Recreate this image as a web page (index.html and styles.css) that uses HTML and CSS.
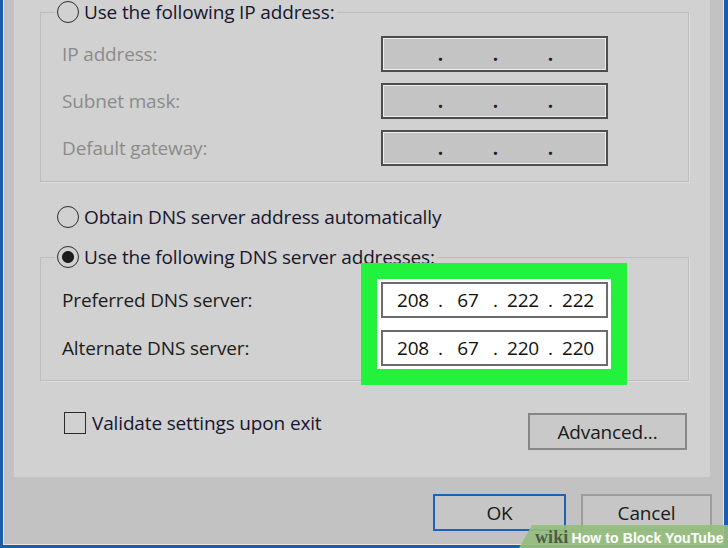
FILE: index.html
```html
<!DOCTYPE html>
<html>
<head>
<meta charset="utf-8">
<link rel="stylesheet" href="styles.css">
</head>
<body>
<div class="window">
  <div class="inner">
    <div class="panel">
      <fieldset class="group">
        <legend class="group-title"><span class="radio"></span><span>Use the following IP address:</span></legend>
        <div class="grid disabled">
          <span class="label">IP address:</span>
          <div class="ipfield off"><span></span><i>.</i><span></span><i>.</i><span></span><i>.</i><span></span></div>
          <span class="label">Subnet mask:</span>
          <div class="ipfield off"><span></span><i>.</i><span></span><i>.</i><span></span><i>.</i><span></span></div>
          <span class="label">Default gateway:</span>
          <div class="ipfield off"><span></span><i>.</i><span></span><i>.</i><span></span><i>.</i><span></span></div>
        </div>
      </fieldset>

      <div class="option"><span class="radio"></span><span>Obtain DNS server address automatically</span></div>

      <fieldset class="group dns">
        <legend class="group-title"><span class="radio checked"></span><span>Use the following DNS server addresses:</span></legend>
        <div class="grid dns-grid">
          <div class="highlight"></div>
          <span class="label r1">Preferred DNS server:</span>
          <div class="ipfield on r1"><span>208</span><i>.</i><span>67</span><i>.</i><span>222</span><i>.</i><span>222</span></div>
          <span class="label r2">Alternate DNS server:</span>
          <div class="ipfield on r2"><span>208</span><i>.</i><span>67</span><i>.</i><span>220</span><i>.</i><span>220</span></div>
        </div>
      </fieldset>

      <div class="panel-foot">
        <div class="check"><span class="box"></span><span>Validate settings upon exit</span></div>
        <button class="btn advanced">Advanced...</button>
      </div>
    </div>
    <div class="actions">
      <button class="btn ok">OK</button>
      <button class="btn cancel">Cancel</button>
    </div>
  </div>
</div>
<div class="badge"><b class="wiki">wiki</b>How to Block YouTube</div>
</body>
</html>
```

FILE: styles.css
```css
html, body {
  margin: 0;
  padding: 0;
}
body {
  position: relative;
  width: 728px;
  height: 548px;
  overflow: hidden;
  font-family: "Open Sans", "Noto Sans", sans-serif;
  font-size: 19px;
  letter-spacing: -0.15px;
  color: #1c1c1c;
  background: #c2c2c2;
}
.window {
  box-sizing: border-box;
  height: 548px;
  border-style: solid;
  border-color: #1a5eab;
  border-width: 0 4px 3px 3px;
  background: #c2c2c2;
}
.inner {
  box-sizing: border-box;
  height: 100%;
  border-style: solid;
  border-color: #ece4df;
  border-width: 0 1px 1px 1px;
  display: flex;
  flex-direction: column;
}
.panel {
  margin: 0 13px 0 10px;
  padding: 0 21px 27px 26px;
  background: #d1d1d1;
}
.group {
  margin: 0;
  padding: 0;
  border: 1px solid #bdbdbd;
  box-shadow: 1px 1px 0 #dddddd;
  min-width: 0;
}
.group-title {
  margin-left: 14px;
  padding: 0 3px 0 2px;
  display: flex;
  align-items: center;
  gap: 5px;
  line-height: 24px;
  color: #16162e;
}
.radio {
  box-sizing: border-box;
  width: 22px;
  height: 22px;
  border: 1.6px solid #2b2b2b;
  border-radius: 50%;
  flex: none;
}
.radio.checked {
  background: radial-gradient(circle, #1c1c1c 0 5.5px, transparent 6.5px);
}
.grid {
  display: grid;
  grid-template-columns: 319px 227px;
  row-gap: 11px;
  padding: 12px 0 15px 21px;
}
.dns-grid {
  row-gap: 12px;
  padding: 13px 0 14px 21px;
}
.label {
  align-self: center;
  line-height: 24px;
}
.disabled .label {
  color: #8b8b8b;
}
.r1 { grid-row: 1; }
.r2 { grid-row: 2; }
.dns-grid .label { grid-column: 1; }
.dns-grid .ipfield { grid-column: 2; }
.highlight {
  grid-column: 2;
  grid-row: 1 / 3;
  margin: -19px -19px -19px -20px;
  border: 16px solid #22f23b;
  background: #ffffff;
}
.ipfield {
  box-sizing: border-box;
  height: 36px;
  display: grid;
  grid-template-columns: 40px 15px 40px 15px 40px 15px 40px;
  align-items: center;
  padding-left: 10px;
  line-height: 24px;
}
.ipfield span, .ipfield i {
  text-align: center;
  font-style: normal;
}
.ipfield.off {
  border: 2px solid #4d4d4d;
  box-shadow: inset 0 0 0 1px #ececec;
  background: #c4c4c4;
  color: #222222;
  font-weight: bold;
}
.ipfield.on {
  border: 2px solid #6c6c6c;
  background: #ffffff;
  color: #111111;
}
.option {
  margin: 23px 0 0 17px;
  display: flex;
  align-items: center;
  gap: 5px;
  line-height: 24px;
  color: #16162e;
}
.dns {
  margin-top: 16px;
}
.panel-foot {
  margin-top: 32px;
  display: flex;
  justify-content: space-between;
  align-items: flex-start;
  padding: 0 2px 0 24px;
}
.check {
  margin-top: -2px;
  display: flex;
  align-items: center;
  gap: 6px;
  line-height: 24px;
  color: #16162e;
}
.box {
  box-sizing: border-box;
  width: 22px;
  height: 22px;
  border: 1.6px solid #2b2b2b;
}
.btn {
  box-sizing: border-box;
  height: 37px;
  margin: 0;
  padding: 0;
  font: inherit;
  letter-spacing: inherit;
  color: #1a1a1a;
  line-height: 24px;
}
.advanced {
  width: 159px;
  border: 2px solid #878787;
  background: #c9c9c9;
}
.actions {
  display: flex;
  justify-content: flex-end;
  gap: 15px;
  padding: 17px 11px 0 0;
}
.ok {
  width: 133px;
  border: 2px solid #1a63b6;
  background: #c6c6c6;
}
.cancel {
  width: 131px;
  border: 2px solid #9d9d9d;
  background: #c6c6c6;
}
.badge {
  position: absolute;
  right: 0;
  bottom: 0;
  width: 209px;
  height: 23px;
  box-sizing: border-box;
  padding-left: 16px;
  clip-path: polygon(13px 0, 100% 0, 100% 100%, 0 100%);
  background: rgba(150, 190, 126, 0.92);
  font-family: "Liberation Sans", Arial, sans-serif;
  font-weight: bold;
  font-size: 14px;
  letter-spacing: 0.1px;
  line-height: 24px;
  color: #ffffff;
  white-space: nowrap;
}
.wiki {
  font-family: "Liberation Serif", "Times New Roman", serif;
  font-size: 18px;
  color: #4d5b47;
  margin-right: 3px;
}
```
